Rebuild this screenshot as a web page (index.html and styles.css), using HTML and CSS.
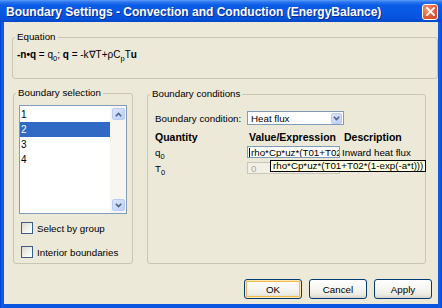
FILE: index.html
```html
<!DOCTYPE html>
<html>
<head>
<meta charset="utf-8">
<link rel="stylesheet" href="styles.css">
</head>
<body>
<div class="window">
  <div class="titlebar">
    <span class="title">Boundary Settings - Convection and Conduction (EnergyBalance)</span>
    <span class="close"><svg width="9" height="9" viewBox="0 0 9 9"><path d="M1 1 L8 8 M8 1 L1 8" stroke="#fff" stroke-width="1.8" stroke-linecap="square"/></svg></span>
  </div>
  <div class="client">
    <fieldset class="group eq">
      <legend>Equation</legend>
      <div class="eqtext"><b>-n•q</b> = q<sub>0</sub>; <b>q</b> = -k∇T+ρC<sub>p</sub>T<b>u</b></div>
    </fieldset>
    <div class="mid">
      <fieldset class="group bsel">
        <legend>Boundary selection</legend>
        <div class="listbox">
          <div class="items">
            <div class="item">1</div>
            <div class="item sel">2</div>
            <div class="item">3</div>
            <div class="item">4</div>
          </div>
          <div class="sb">
            <span class="sbtn"><svg width="7" height="5" viewBox="0 0 7 5"><path d="M0.8 4.2 L3.5 1.5 L6.2 4.2" fill="none" stroke="#4D6185" stroke-width="1.6"/></svg></span>
            <span class="sbtn"><svg width="7" height="5" viewBox="0 0 7 5"><path d="M0.8 0.8 L3.5 3.5 L6.2 0.8" fill="none" stroke="#4D6185" stroke-width="1.6"/></svg></span>
          </div>
        </div>
        <div class="chk first"><span class="box"></span><span>Select by group</span></div>
        <div class="chk second"><span class="box"></span><span>Interior boundaries</span></div>
      </fieldset>
      <fieldset class="group bcond">
        <legend>Boundary conditions</legend>
        <div class="row r1">
          <span class="c1">Boundary condition:</span>
          <span class="combo"><span class="ctext">Heat flux</span><span class="cbtn"><svg width="7" height="5" viewBox="0 0 7 5"><path d="M0.8 0.8 L3.5 3.5 L6.2 0.8" fill="none" stroke="#4D6185" stroke-width="1.6"/></svg></span></span>
        </div>
        <div class="row rh">
          <span class="c1">Quantity</span>
          <span class="c2">Value/Expression</span>
          <span class="c3 hd">Description</span>
        </div>
        <div class="row rq">
          <span class="c1">q<sub>0</sub></span>
          <span class="c2"><span class="input"><span class="caret"></span>rho*Cp*uz*(T01+T02*(1-exp(-a*t)))</span></span>
          <span class="c3">Inward heat flux</span>
          <span class="tooltip">rho*Cp*uz*(T01+T02*(1-exp(-a*t)))</span>
        </div>
        <div class="row rt">
          <span class="c1">T<sub>0</sub></span>
          <span class="c2"><span class="input dis">0</span></span>
        </div>
      </fieldset>
    </div>
    <div class="buttons">
      <span class="btn def">OK</span>
      <span class="btn">Cancel</span>
      <span class="btn">Apply</span>
    </div>
  </div>
</div>
</body>
</html>
```

FILE: styles.css
```css
* { box-sizing: border-box; }
html, body { margin: 0; padding: 0; }
body {
  width: 442px;
  height: 308px;
  overflow: hidden;
  font-family: "Liberation Sans", Arial, sans-serif;
  font-size: 9.75px;
  color: #000;
  background: #fff;
}
.window {
  width: 442px;
  height: 308px;
  display: flex;
  flex-direction: column;
  background: linear-gradient(to right, #0A3FC8 0, #1160EC 2px, #0A56E0 4px, #0A56E0 438px, #1160EC 440px, #0A3FC8 442px);
}
.titlebar {
  height: 22px;
  flex: none;
  display: flex;
  align-items: center;
  padding: 0 4px 0 6px;
  background: linear-gradient(#5A9CF8 0%, #2A74F0 10%, #0A5CE6 25%, #0758E3 55%, #0652DC 85%, #0447C8 100%);
  color: #fff;
}
.title {
  flex: 1;
  font-family: "Liberation Sans", Arial, sans-serif;
  font-weight: bold;
  font-size: 12px;
  white-space: nowrap;
  text-shadow: 1px 1px 0 #0A2A8A;
  padding-top: 1px;
}
.close {
  width: 16px;
  height: 16px;
  border: 1px solid #fff;
  border-radius: 3px;
  background: radial-gradient(circle at 30% 30%, #F39A78 0%, #E45C33 55%, #C9431C 100%);
  display: flex;
  align-items: center;
  justify-content: center;
  margin-top: 1px;
}
.client {
  flex: 1;
  margin: 0 4px 4px 4px;
  background: #ECE9D8;
  display: flex;
  flex-direction: column;
  padding: 9px 0 0 8px;
}
.group {
  border: 1px solid #C8C5B3;
  border-radius: 3px;
  margin: 0;
  min-width: 0;
  flex: none;
}
legend {
  padding: 0 2px;
  margin-left: 0;
  line-height: 12px;
  height: 12px;
}
.eq {
  padding: 6px 0 17px 2px;
}
.eqtext {
  font-size: 10px;
  line-height: 12px;
  white-space: nowrap;
  padding-left: 2px;
}
sub {
  font-size: 7.5px;
  vertical-align: -3px;
  line-height: 0;
}
.mid {
  display: flex;
  margin-top: 8px;
  padding-left: 1px;
  gap: 14px;
  flex: none;
}
.bsel {
  width: 120px;
  height: 177px;
  padding: 6px 5px 0 2px;
}
.listbox {
  width: 108px;
  height: 109px;
  border: 1px solid #7F9DB9;
  background: #fff;
  display: flex;
  margin-left: 3px;
}
.items {
  flex: 1;
  padding-top: 1px;
}
.item {
  height: 15px;
  line-height: 15px;
  padding-left: 1px;
  font-size: 10px;
}
.item.sel {
  background: #316AC5;
  color: #fff;
}
.sb {
  width: 16px;
  background: #F7F6F1;
  display: flex;
  flex-direction: column;
  justify-content: space-between;
  padding: 2px 1px 2px 2px;
}
.sbtn {
  width: 13px;
  height: 12px;
  border: 1px solid #B8CCF7;
  border-radius: 2px;
  background: linear-gradient(135deg, #DCE6FD, #BBCEFB);
  display: flex;
  align-items: center;
  justify-content: center;
}
.chk {
  display: flex;
  align-items: center;
  height: 12px;
  margin-left: 5px;
  gap: 4px;
  white-space: nowrap;
}
.chk.first { margin-top: 8px; }
.chk.second { margin-top: 12px; }
.box {
  width: 12px;
  height: 12px;
  border: 1px solid #3C5E86;
  background: linear-gradient(135deg, #D8D8D0, #F4F4F0 60%, #fff);
  flex: none;
}
.bcond {
  width: 279px;
  height: 176px;
  margin-top: 1px;
  padding: 11px 0 0 2px;
}
.row {
  display: flex;
  align-items: center;
  height: 12px;
  white-space: nowrap;
  padding-left: 5px;
}
.r1 { height: 14px; }
.rh { margin-top: 6px; font-weight: bold; font-size: 10.5px; }
.rq { margin-top: 3px; position: relative; }
.rt { margin-top: 4px; }
.c1 { width: 92px; flex: none; }
.c2 { width: 95px; flex: none; }
.c3.hd { padding-left: 2px; }
.rh .c2 { padding-left: 2px; }
.combo {
  width: 97px;
  height: 14px;
  border: 1px solid #7F9DB9;
  background: #fff;
  display: flex;
  align-items: center;
  padding: 1px;
}
.ctext { flex: 1; padding-left: 2px; }
.cbtn {
  width: 11px;
  height: 11px;
  border: 1px solid #B8CCF7;
  border-radius: 2px;
  background: linear-gradient(135deg, #DCE6FD, #BBCEFB);
  display: flex;
  align-items: center;
  justify-content: center;
}
.input {
  display: flex;
  align-items: center;
  width: 93px;
  height: 12px;
  border: 1px solid #7F9DB9;
  background: #fff;
  overflow: hidden;
  padding-left: 1px;
  white-space: nowrap;
}
.caret {
  width: 1px;
  height: 9px;
  background: #000;
  margin-right: 1px;
  flex: none;
}
.input.dis {
  background: #F2F0E6;
  border-color: #C9C7BA;
  color: #ACA899;
  padding-left: 3px;
}
.tooltip {
  position: absolute;
  left: 120px;
  top: 14px;
  height: 12px;
  line-height: 10px;
  border: 1px solid #000;
  background: #FFFFE1;
  padding: 0 2px;
  white-space: nowrap;
}
.buttons {
  display: flex;
  justify-content: flex-end;
  gap: 7px;
  margin-top: 15px;
  padding-right: 6px;
  flex: none;
}
.btn {
  width: 58px;
  height: 20px;
  border: 1px solid #003C74;
  border-radius: 3px;
  background: linear-gradient(#FFFFFF 0%, #F6F6F2 45%, #ECEBE3 80%, #D8D3C7 100%);
  display: flex;
  align-items: center;
  justify-content: center;
}
.btn.def {
  box-shadow: inset 0 0 0 1px #FFE9B0, inset 0 0 0 2px #F1B84C;
}
```
